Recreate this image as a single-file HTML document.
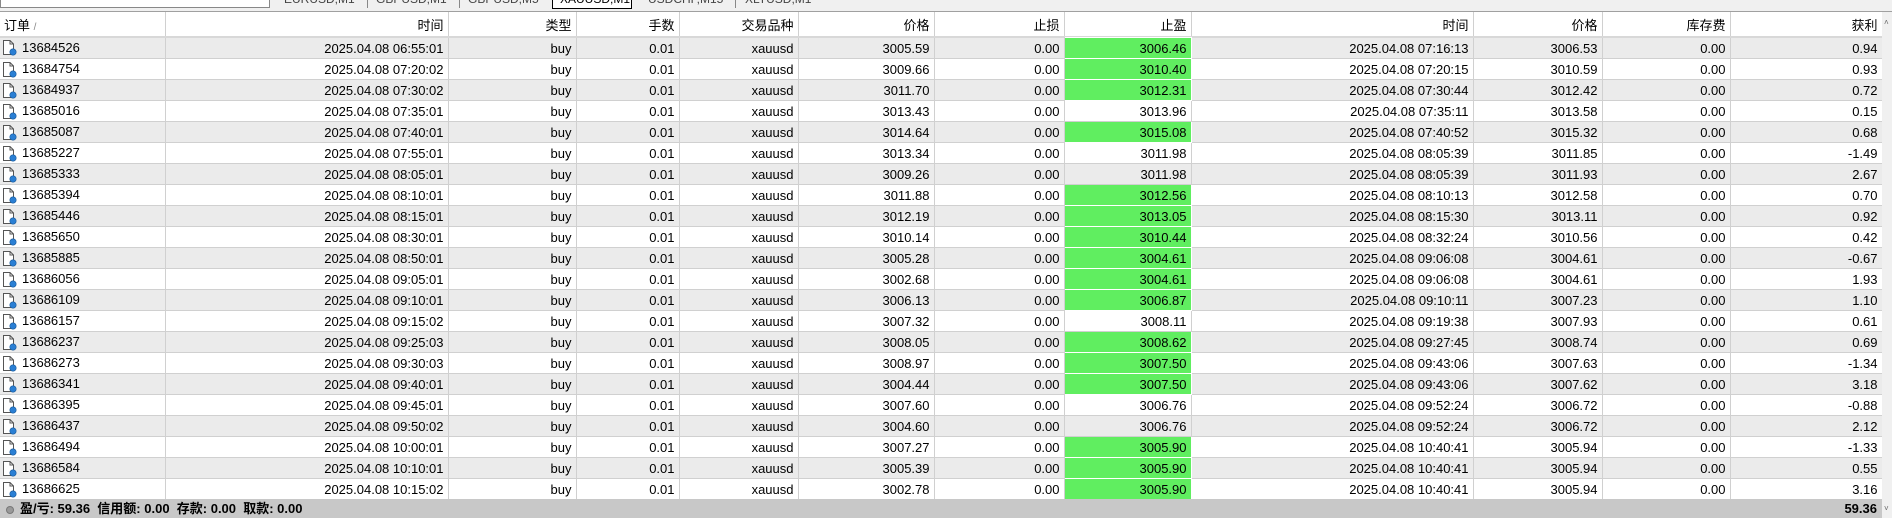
<!DOCTYPE html>
<html><head><meta charset="utf-8"><style>
*{margin:0;padding:0;box-sizing:border-box}
body{width:1892px;height:518px;overflow:hidden;background:#fff;font-family:"Liberation Sans","Noto Sans CJK SC",sans-serif;font-size:13px;color:#000;position:relative}
.tabs{position:absolute;left:0;top:0;width:1892px;height:12px;background:#f0f0f0;overflow:hidden;border-bottom:1px solid #a0a0a0}
.tabs span{position:absolute;top:-8px;font-size:12px;color:#444;white-space:nowrap}
table{position:absolute;left:0;top:12px;border-collapse:collapse;table-layout:fixed;width:1882px}
td,th{height:21px;padding:1px 4px 0 4px;text-align:right;white-space:nowrap;overflow:hidden;border-right:1px solid #d0d0d0;border-bottom:1px solid #d0d0d0;font-weight:normal}
th{height:25px;background:#fff;border-bottom:2px solid #d8d8d8}
th:first-child,td:first-child{text-align:left}
tr.g td{background:#ebebeb}
td.tp{background:#60ee60 !important;border:1px solid #fff}
.ic{display:inline-block;vertical-align:middle;margin:-2px 5px 0 -2px}
.foot{position:absolute;left:0;top:499px;width:1882px;height:19px;background:#c8c8c8;font-weight:bold;font-size:13px;line-height:19px}
.sb{position:absolute;left:1882px;top:12px;width:10px;height:506px;background:#f0f0f0}
</style></head><body>
<div class="tabs">
<div style="position:absolute;left:0;top:-2px;width:270px;height:10px;background:#fff;border:1px solid #888"></div>
<span style="left:284px">EURUSD,M1</span><div style="position:absolute;left:367px;top:0;width:1px;height:8px;background:#888"></div>
<span style="left:376px">GBPUSD,M1</span><div style="position:absolute;left:459px;top:0;width:1px;height:8px;background:#888"></div>
<span style="left:468px">GBPUSD,M5</span>
<div style="position:absolute;left:552px;top:-2px;width:80px;height:11px;background:#fff;border:1px solid #000"></div><span style="left:560px;color:#000">XAUUSD,M1</span>
<span style="left:648px">USDCHF,M15</span><div style="position:absolute;left:735px;top:0;width:1px;height:8px;background:#888"></div>
<span style="left:745px">XLTUSD,M1</span>
</div>
<table>
<colgroup><col style="width:165px"><col style="width:283px"><col style="width:128px"><col style="width:103px"><col style="width:119px"><col style="width:136px"><col style="width:130px"><col style="width:127px"><col style="width:282px"><col style="width:129px"><col style="width:128px"><col style="width:152px"></colgroup>
<tr><th>订单 <span style="color:#888;font-size:10px">/</span></th><th>时间</th><th>类型</th><th>手数</th><th>交易品种</th><th>价格</th><th>止损</th><th>止盈</th><th>时间</th><th>价格</th><th>库存费</th><th>获利</th></tr>
</table>
<table style="top:37px" id="b">
<colgroup><col style="width:165px"><col style="width:283px"><col style="width:128px"><col style="width:103px"><col style="width:119px"><col style="width:136px"><col style="width:130px"><col style="width:127px"><col style="width:282px"><col style="width:129px"><col style="width:128px"><col style="width:152px"></colgroup>
<tbody></tbody></table>
<div class="foot"><span style="display:inline-block;width:8px;height:8px;border-radius:50%;background:#999;border:1px solid #777;margin:0 6px 0 6px;vertical-align:middle"></span>盈/亏: 59.36&nbsp; 信用额: 0.00&nbsp; 存款: 0.00&nbsp; 取款: 0.00<span style="position:absolute;right:5px">59.36</span></div>
<div class="sb"><div style="position:absolute;top:6px;left:2px;font-size:8px;color:#666">&#708;</div><div style="position:absolute;top:492px;left:2px;font-size:8px;color:#666">&#709;</div></div>
<script>
var d=[["13684526","06:55:01","3005.59","3006.46",1,"07:16:13","3006.53","0.94"],
["13684754","07:20:02","3009.66","3010.40",1,"07:20:15","3010.59","0.93"],
["13684937","07:30:02","3011.70","3012.31",1,"07:30:44","3012.42","0.72"],
["13685016","07:35:01","3013.43","3013.96",0,"07:35:11","3013.58","0.15"],
["13685087","07:40:01","3014.64","3015.08",1,"07:40:52","3015.32","0.68"],
["13685227","07:55:01","3013.34","3011.98",0,"08:05:39","3011.85","-1.49"],
["13685333","08:05:01","3009.26","3011.98",0,"08:05:39","3011.93","2.67"],
["13685394","08:10:01","3011.88","3012.56",1,"08:10:13","3012.58","0.70"],
["13685446","08:15:01","3012.19","3013.05",1,"08:15:30","3013.11","0.92"],
["13685650","08:30:01","3010.14","3010.44",1,"08:32:24","3010.56","0.42"],
["13685885","08:50:01","3005.28","3004.61",1,"09:06:08","3004.61","-0.67"],
["13686056","09:05:01","3002.68","3004.61",1,"09:06:08","3004.61","1.93"],
["13686109","09:10:01","3006.13","3006.87",1,"09:10:11","3007.23","1.10"],
["13686157","09:15:02","3007.32","3008.11",0,"09:19:38","3007.93","0.61"],
["13686237","09:25:03","3008.05","3008.62",1,"09:27:45","3008.74","0.69"],
["13686273","09:30:03","3008.97","3007.50",1,"09:43:06","3007.63","-1.34"],
["13686341","09:40:01","3004.44","3007.50",1,"09:43:06","3007.62","3.18"],
["13686395","09:45:01","3007.60","3006.76",0,"09:52:24","3006.72","-0.88"],
["13686437","09:50:02","3004.60","3006.76",0,"09:52:24","3006.72","2.12"],
["13686494","10:00:01","3007.27","3005.90",1,"10:40:41","3005.94","-1.33"],
["13686584","10:10:01","3005.39","3005.90",1,"10:40:41","3005.94","0.55"],
["13686625","10:15:02","3002.78","3005.90",1,"10:40:41","3005.94","3.16"]];
var ic='<svg class="ic" width="15" height="17" viewBox="0 0 15 17"><path d="M1.5 1.5h6.5l3.5 3.5v10.5h-10z" fill="#fff" stroke="#555"/><path d="M8 1.5v3.5h3.5" fill="none" stroke="#555"/><circle cx="11" cy="13" r="3.2" fill="#2a7fd4" stroke="#1a5a9a" stroke-width=".6"/></svg>';
var h='';d.forEach(function(r,i){h+='<tr'+(i%2==0?' class="g"':'')+'><td>'+ic+r[0]+'</td><td>2025.04.08 '+r[1]+'</td><td>buy</td><td>0.01</td><td>xauusd</td><td>'+r[2]+'</td><td>0.00</td><td'+(r[4]?' class="tp"':'')+'>'+r[3]+'</td><td>2025.04.08 '+r[5]+'</td><td>'+r[6]+'</td><td>0.00</td><td>'+r[7]+'</td></tr>';});
document.querySelector('#b tbody').innerHTML=h;
</script>
</body></html>
